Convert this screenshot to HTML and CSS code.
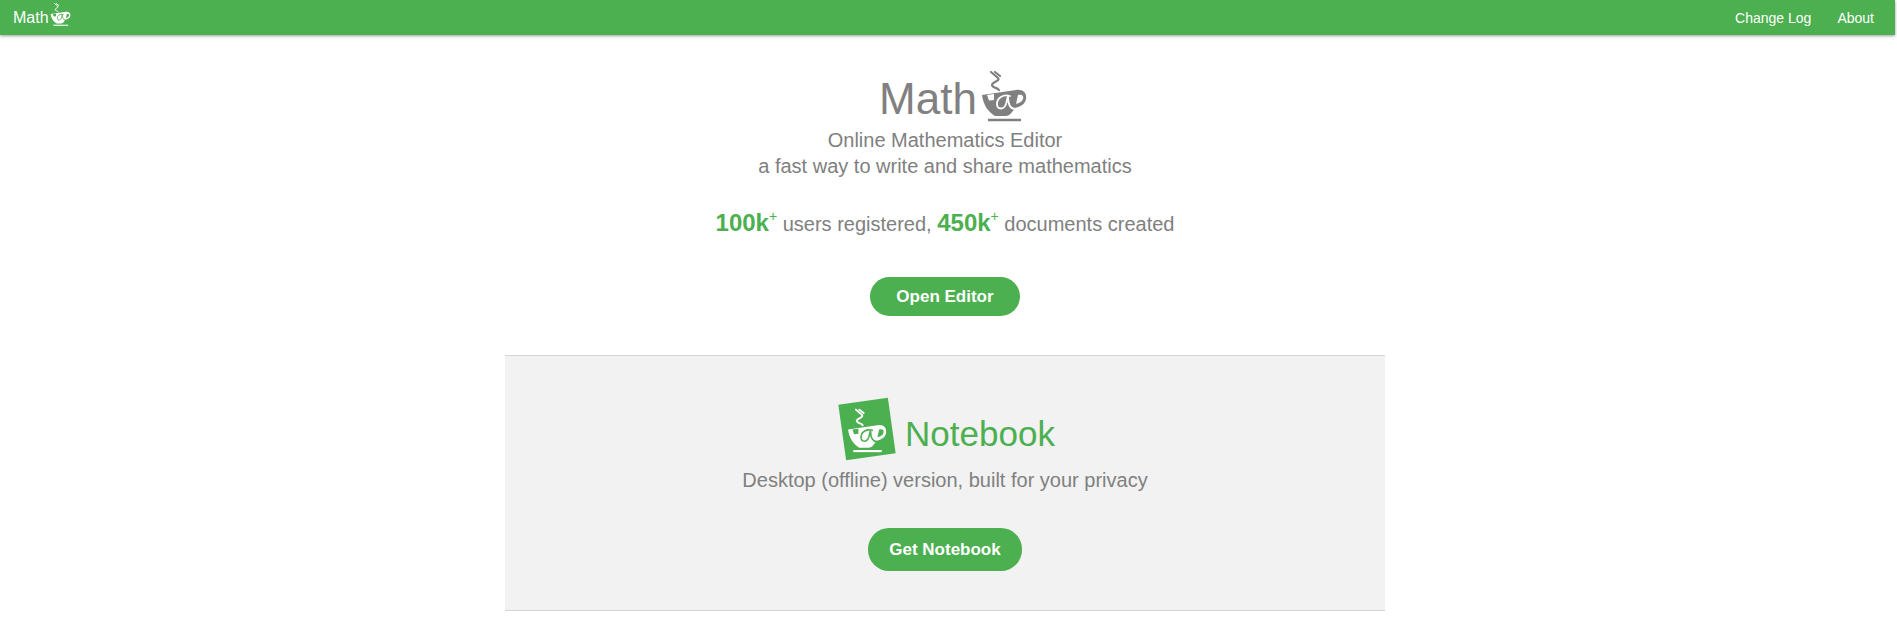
FILE: index.html
```html
<!DOCTYPE html>
<html lang="en">
<head>
<meta charset="utf-8">
<title>Math</title>
<link rel="stylesheet" href="styles.css">
</head>
<body>
<svg class="defs" width="0" height="0" aria-hidden="true">
  <symbol id="cup" viewBox="0 0 60 66">
    <path class="steam" d="M17 10 L24 16 C27 19 18 20 18 23 C18 26 23 25 25 28"/>
    <path class="steam" d="M21 10 L26 14"/>
    <path class="body" d="M8 33 L42 28 C49 27 53 31 52 37 C51 43 45 45 41 46 C38 50 36 54 32 54 L21 54 C14 50 9 42 8 33 Z"/>
    <path class="inner" d="M44 33 C48 32 50 34 49 37 C48 40 45 41 42 42 Z"/>
    <path class="notch" d="M13 33 L20 32 L20 38 L15 38.5 Z"/>
    <path class="alpha" d="M36 34 C29 32 23 36 23 42 C23 48 30 48 32 42 L34 34 C34 40 35 47 41 47"/>
    <path class="saucer" d="M14 58 H47"/>
  </symbol>
</svg>

<header class="topbar">
  <a class="brand" href="#">Math<svg class="brand-cup"><use href="#cup"/></svg></a>
  <nav class="toplinks">
    <a href="#">Change Log</a>
    <a href="#">About</a>
  </nav>
</header>

<main class="page">
  <section class="hero">
    <h1 class="logo">Math<svg class="logo-cup"><use href="#cup"/></svg></h1>
    <p class="tagline">Online Mathematics Editor<br>a fast way to write and share mathematics</p>
    <p class="stats"><strong>100k<sup>+</sup></strong> users registered, <strong>450k<sup>+</sup></strong> documents created</p>
    <a class="btn btn-editor" href="#">Open Editor</a>
  </section>

  <section class="notebook">
    <div class="notebook-title">
      <span class="tile"><svg class="tile-cup"><use href="#cup"/></svg></span>
      <h2>Notebook</h2>
    </div>
    <p class="notebook-sub">Desktop (offline) version, built for your privacy</p>
    <a class="btn btn-notebook" href="#">Get Notebook</a>
  </section>
</main>
</body>
</html>
```
FILE: styles.css
```css
* { box-sizing: border-box; }

html, body {
  margin: 0;
  height: 100%;
  overflow: hidden;
  background: #fff;
}

body {
  font-family: "Liberation Sans", Arial, sans-serif;
  color: #808080;
}

a { text-decoration: none; }

.defs { position: absolute; }

.steam, .alpha, .saucer {
  fill: none;
  stroke-linecap: round;
}
.steam { stroke: var(--cup-fg); stroke-width: 2.2; }
.body { fill: var(--cup-fg); }
.inner, .notch { fill: var(--cup-bg); }
.alpha { stroke: var(--cup-bg); stroke-width: 1.8; }
.saucer { stroke: var(--cup-fg); stroke-width: 2.5; stroke-linecap: butt; }

.topbar {
  display: flex;
  justify-content: space-between;
  align-items: center;
  height: 35px;
  margin-right: 2px;
  padding: 0 21px 0 13px;
  background: #4caf50;
  box-shadow: 0 1px 3px rgba(0, 0, 0, 0.4);
}

.brand {
  display: flex;
  align-items: center;
  color: #fff;
  font-size: 16px;
  --cup-fg: #fff;
  --cup-bg: #4caf50;
}

.brand-cup {
  width: 27px;
  height: 30px;
  margin: -8px 0 0 -2px;
}

.toplinks {
  display: flex;
  gap: 26px;
}

.toplinks a {
  color: #fff;
  font-size: 14px;
}

.page {
  width: 1890px;
  display: flex;
  flex-direction: column;
  align-items: center;
}

.hero {
  display: flex;
  flex-direction: column;
  align-items: center;
  padding-top: 31px;
  height: 320px;
}

.logo {
  display: flex;
  align-items: center;
  height: 66px;
  margin: 0;
  padding-left: 23px;
  font-size: 44px;
  font-weight: 400;
  --cup-fg: #808080;
  --cup-bg: #fff;
}

.logo-cup {
  width: 60px;
  height: 66px;
  margin: -8px 0 0 -3px;
}

.tagline {
  margin: -5px 0 0;
  font-size: 20px;
  line-height: 26px;
  text-align: center;
}

.stats {
  margin: 29px 0 0;
  font-size: 20px;
  line-height: 30px;
}

.stats strong {
  color: #4caf50;
  font-size: 24px;
}

.stats sup {
  font-size: 14px;
  font-weight: 400;
  line-height: 0;
  vertical-align: 10px;
}

.btn {
  display: flex;
  align-items: center;
  justify-content: center;
  background: #4caf50;
  color: #fff;
  font-size: 17px;
  font-weight: 700;
}

.btn-editor {
  width: 150px;
  height: 39px;
  margin-top: 38px;
  border-radius: 20px;
}

.notebook {
  display: flex;
  flex-direction: column;
  align-items: center;
  width: 880px;
  height: 256px;
  padding-top: 45px;
  background: #f2f2f2;
  border-top: 1px solid #d3d3d3;
  border-bottom: 1px solid #d3d3d3;
}

.notebook-title {
  display: flex;
  align-items: center;
  gap: 13px;
  margin-left: 7px;
}

.notebook-title h2 {
  margin: 0;
  padding-top: 10px;
  color: #4caf50;
  font-size: 35px;
  font-weight: 400;
}

.tile {
  display: flex;
  align-items: center;
  justify-content: center;
  flex-shrink: 0;
  width: 50px;
  height: 56px;
  background: #4caf50;
  transform: rotate(-8deg);
  --cup-fg: #fff;
  --cup-bg: #4caf50;
}

.tile-cup {
  flex-shrink: 0;
  width: 52px;
  height: 57px;
  transform: rotate(8deg);
}

.notebook-sub {
  margin: 10px 0 0;
  font-size: 20px;
  line-height: 26px;
}

.btn-notebook {
  width: 154px;
  height: 43px;
  margin-top: 35px;
  border-radius: 21px;
}
```
